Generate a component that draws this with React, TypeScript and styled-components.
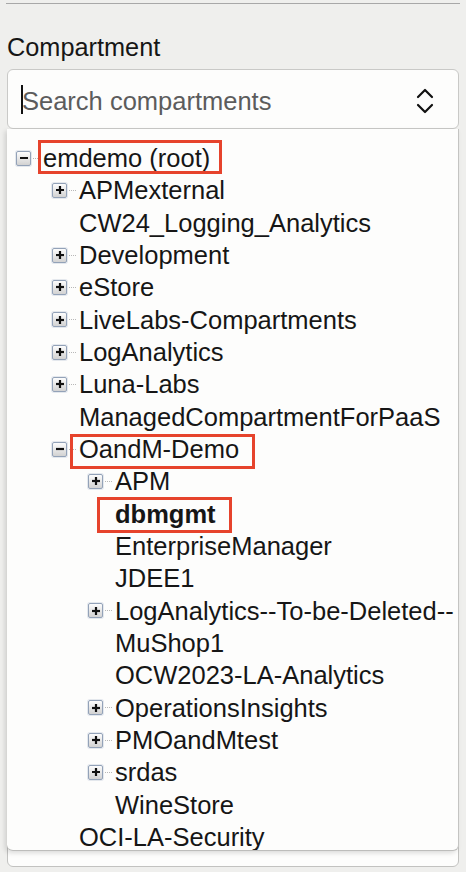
import React from "react";
import styled, { createGlobalStyle } from "styled-components";

const GlobalStyle = createGlobalStyle`
  html, body { margin: 0; padding: 0; }
  body {
    background: #efefed;
    font-family: "Liberation Sans", Arial, Helvetica, sans-serif;
    color: #161616;
  }
`;

const Page = styled.div`
  height: 872px;
  overflow: hidden;
  padding: 0 7px;
  box-sizing: border-box;
`;

const Divider = styled.div`
  margin: 3px -1px 0;
  border-top: 1px solid #a8a8a8;
`;

const Label = styled.div`
  margin-top: 28px;
  font-size: 25.3px;
  line-height: 30px;
  color: #161616;
`;

const Combo = styled.div`
  position: relative;
  margin-top: 7px;
`;

const SearchBox = styled.div`
  height: 60px;
  box-sizing: border-box;
  border: 1px solid #c9c9c7;
  border-radius: 6px;
  background: #fdfdfc;
  display: flex;
  align-items: center;
  padding: 4px 24px 0 13px;
`;

const Caret = styled.span`
  width: 2px;
  height: 29px;
  background: #111;
  margin-top: -4px;
  flex: none;
`;

const Placeholder = styled.span`
  flex: 1;
  font-size: 25.5px;
  color: #5c5c5c;
  margin-left: -1px;
  white-space: nowrap;
`;

const Popup = styled.div`
  position: absolute;
  top: 60px;
  left: 0;
  right: 0;
  height: 722px;
  box-sizing: border-box;
  padding-top: 13px;
  background: #fdfdfc;
  border-right: 1px solid #c4c4c2;
  border-bottom: 1px solid #bdbdbb;
  border-radius: 0 0 6px 6px;
  box-shadow: -2px 2px 5px rgba(0, 0, 0, 0.14);
  overflow: hidden;
  z-index: 2;
`;

const Row = styled.div<{ $level: number }>`
  height: 32.33px;
  display: flex;
  align-items: center;
  padding-left: ${(p) => 9 + p.$level * 36}px;
  white-space: nowrap;
`;

const IconSlot = styled.span`
  width: 27px;
  flex: none;
  display: flex;
  align-items: center;
`;

const Toggle = styled.span`
  width: 15px;
  height: 15px;
  box-sizing: border-box;
  border: 1px solid #93a2b8;
  border-radius: 2px;
  background: linear-gradient(#fdfdfd, #d2d2d2);
  display: flex;
  align-items: center;
  justify-content: center;
  flex: none;
  box-shadow: 0 0 0 1px rgba(190, 200, 215, 0.4);
`;

const Connector = styled.span`
  width: 7px;
  margin-left: 2px;
  border-top: 1px dotted #b8b8b8;
`;

const Name = styled.span<{ $bold?: boolean }>`
  position: relative;
  font-size: 25.5px;
  line-height: 32.33px;
  font-weight: ${(p) => (p.$bold ? 700 : 400)};
  color: #161616;
`;

const Highlight = styled.span<{ $t: number; $r: number; $b: number; $l: number }>`
  position: absolute;
  top: ${(p) => p.$t}px;
  right: ${(p) => p.$r}px;
  bottom: ${(p) => p.$b}px;
  left: ${(p) => p.$l}px;
  border: 3px solid #e6432c;
  pointer-events: none;
`;

const CoveredField = styled.div`
  margin-top: 678px;
  height: 60px;
  box-sizing: border-box;
  border: 1px solid #c2c2c0;
  border-radius: 6px;
  background: #fdfdfc;
`;

const Chevrons = () => (
  <svg width="18" height="26" viewBox="0 0 18 26" fill="none" stroke="#111" strokeWidth="2.2" strokeLinecap="round" strokeLinejoin="round">
    <path d="M2 9 L9 2 L16 9" />
    <path d="M2 17 L9 24 L16 17" />
  </svg>
);

const ToggleIcon = ({ open }: { open: boolean }) => (
  <Toggle>
    <svg width="10" height="10" viewBox="0 0 10 10" stroke="#111" strokeWidth="2.2">
      <path d="M1 5 H9" />
      {!open && <path d="M5 1 V9" />}
    </svg>
  </Toggle>
);

type Node = {
  name: string;
  level: number;
  toggle?: "open" | "closed";
  bold?: boolean;
  hl?: { t: number; r: number; b: number; l: number };
};

const nodes: Node[] = [
  { name: "emdemo (root)", level: 0, toggle: "open", hl: { t: -2, r: -12, b: 0, l: -5 } },
  { name: "APMexternal", level: 1, toggle: "closed" },
  { name: "CW24_Logging_Analytics", level: 1 },
  { name: "Development", level: 1, toggle: "closed" },
  { name: "eStore", level: 1, toggle: "closed" },
  { name: "LiveLabs-Compartments", level: 1, toggle: "closed" },
  { name: "LogAnalytics", level: 1, toggle: "closed" },
  { name: "Luna-Labs", level: 1, toggle: "closed" },
  { name: "ManagedCompartmentForPaaS", level: 1 },
  { name: "OandM-Demo", level: 1, toggle: "open", hl: { t: 1, r: -16, b: -4, l: -9 } },
  { name: "APM", level: 2, toggle: "closed" },
  { name: "dbmgmt", level: 2, bold: true, hl: { t: -1, r: -16, b: -3, l: -18 } },
  { name: "EnterpriseManager", level: 2 },
  { name: "JDEE1", level: 2 },
  { name: "LogAnalytics--To-be-Deleted--", level: 2, toggle: "closed" },
  { name: "MuShop1", level: 2 },
  { name: "OCW2023-LA-Analytics", level: 2 },
  { name: "OperationsInsights", level: 2, toggle: "closed" },
  { name: "PMOandMtest", level: 2, toggle: "closed" },
  { name: "srdas", level: 2, toggle: "closed" },
  { name: "WineStore", level: 2 },
  { name: "OCI-LA-Security", level: 1 },
];

export default function App() {
  return (
    <>
      <GlobalStyle />
      <Page>
        <Divider />
        <Label>Compartment</Label>
        <Combo>
          <SearchBox>
            <Caret />
            <Placeholder>Search compartments</Placeholder>
            <Chevrons />
          </SearchBox>
          <Popup>
            {nodes.map((n) => (
              <Row key={n.name} $level={n.level}>
                <IconSlot>
                  {n.toggle && (
                    <>
                      <ToggleIcon open={n.toggle === "open"} />
                      <Connector />
                    </>
                  )}
                </IconSlot>
                <Name $bold={n.bold}>
                  {n.name}
                  {n.hl && <Highlight $t={n.hl.t} $r={n.hl.r} $b={n.hl.b} $l={n.hl.l} />}
                </Name>
              </Row>
            ))}
          </Popup>
        </Combo>
        <CoveredField />
      </Page>
    </>
  );
}
